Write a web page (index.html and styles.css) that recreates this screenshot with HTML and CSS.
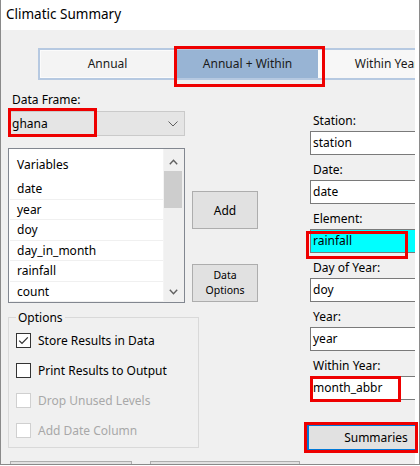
FILE: index.html
```html
<!DOCTYPE html>
<html>
<head>
<meta charset="utf-8">
<link rel="stylesheet" href="styles.css">
</head>
<body>
<div class="window">
  <div class="titlebar">Climatic Summary</div>
  <div class="client">
    <div class="tabs">
      <div class="tab">Annual</div>
      <div class="tab selected">Annual + Within</div>
      <div class="tab third">Within Year</div>
    </div>
    <div class="body">
      <div class="left">
        <div class="df-label">Data Frame:</div>
        <div class="combo">
          <span>ghana</span>
          <svg class="combo-arrow" width="10" height="6" viewBox="0 0 10 6"><path d="M0.5 0.5 L5 5 L9.5 0.5" fill="none" stroke="#5f5f5f" stroke-width="1"/></svg>
        </div>
        <div class="listbox">
          <div class="list-items">
            <div class="list-header">Variables</div>
            <div class="list-row">date</div>
            <div class="list-row">year</div>
            <div class="list-row">doy</div>
            <div class="list-row">day_in_month</div>
            <div class="list-row">rainfall</div>
            <div class="list-row">count</div>
          </div>
          <div class="scrollbar">
            <div class="sb-btn"><svg width="9" height="6" viewBox="0 0 9 6"><path d="M0.8 5.2 L4.5 1.2 L8.2 5.2" fill="none" stroke="#606060" stroke-width="1.4"/></svg></div>
            <div class="sb-thumb"></div>
            <div class="sb-track"></div>
            <div class="sb-btn"><svg width="9" height="6" viewBox="0 0 9 6"><path d="M0.8 0.8 L4.5 4.8 L8.2 0.8" fill="none" stroke="#606060" stroke-width="1.4"/></svg></div>
          </div>
        </div>
        <div class="group">
          <div class="legend">Options</div>
          <div class="check-row">
            <span class="checkbox"><svg width="13" height="13" viewBox="0 0 13 13"><path d="M2.2 6.6 L5 9.4 L10.8 3.4" fill="none" stroke="#333" stroke-width="1.3"/></svg></span>
            <span>Store Results in Data</span>
          </div>
          <div class="check-row">
            <span class="checkbox"></span>
            <span>Print Results to Output</span>
          </div>
          <div class="check-row disabled">
            <span class="checkbox"></span>
            <span>Drop Unused Levels</span>
          </div>
          <div class="check-row disabled">
            <span class="checkbox"></span>
            <span>Add Date Column</span>
          </div>
        </div>
        <div class="bottom-row">
          <div class="btn bottom-btn1"></div>
          <div class="btn bottom-btn2"></div>
        </div>
      </div>
      <div class="mid">
        <div class="btn add-btn">Add</div>
        <div class="btn data-btn">Data<br>Options</div>
      </div>
      <div class="right">
        <div class="field-label">Station:</div>
        <div class="input">station</div>
        <div class="field-label">Date:</div>
        <div class="input">date</div>
        <div class="field-label">Element:</div>
        <div class="input cyan">rainfall</div>
        <div class="field-label">Day of Year:</div>
        <div class="input">doy</div>
        <div class="field-label">Year:</div>
        <div class="input">year</div>
        <div class="field-label">Within Year:</div>
        <div class="input">month_abbr</div>
        <div class="btn summaries">Summaries</div>
      </div>
    </div>
  </div>
  <div class="mark mark-tab"></div>
  <div class="mark mark-df"></div>
  <div class="mark mark-element"></div>
  <div class="mark mark-within"></div>
  <div class="mark mark-summaries"></div>
</div>
</body>
</html>
```

FILE: styles.css
```css
* { box-sizing: border-box; }
html, body { margin: 0; padding: 0; background: #fff; }
body {
  font-family: "Noto Sans", "DejaVu Sans", sans-serif;
  font-size: 12px;
  color: #000;
}
.window {
  position: relative;
  width: 420px;
  height: 465px;
  border-left: 1px solid #8a8a8a;
  border-right: 1px solid #8a8a8a;
  border-bottom: 1px solid #8a8a8a;
  background: #fff;
  display: flex;
  flex-direction: column;
  overflow: hidden;
}
.titlebar {
  height: 30px;
  padding-left: 5px;
  font-size: 13.5px;
  line-height: 28px;
  color: #000;
}
.client {
  width: 414px;
  flex: 1;
  background: #f0f0f0;
  overflow: hidden;
}
.tabs {
  display: flex;
  margin: 18px 0 0 37px;
  height: 32px;
  border-top: 2px solid #b6c9e1;
  border-bottom: 2px solid #b6c9e1;
  width: 440px;
}
.tab {
  flex: none;
  width: 137px;
  border-left: 2px solid #b6c9e1;
  background: #f4f4f4;
  box-shadow: inset 0 0 0 1px #fbfbfb;
  text-align: center;
  line-height: 27px;
  color: #1a1a1a;
  white-space: nowrap;
}
.tab.selected {
  width: 143px;
  background: #98b4d4;
  border-left-color: #98b4d4;
  box-shadow: none;
}
.tab.third {
  width: 133px;
  border-left: 5px solid #fafafa;
  background: #f7f7f7;
  box-shadow: none;
}
.body {
  display: grid;
  grid-template-columns: 184px 118px 1fr;
  padding-left: 7px;
}
.left { display: flex; flex-direction: column; align-items: flex-start; }
.df-label {
  margin-top: 12px;
  line-height: 16px;
  padding-left: 4px;
}
.combo {
  margin-top: 3px;
  width: 177px;
  height: 25px;
  background: #e5e5e5;
  border: 1px solid #cacaca;
  display: flex;
  align-items: center;
  justify-content: space-between;
  padding: 0 6px 0 3px;
}
.combo-arrow { margin-top: 1px; }
.listbox {
  margin-top: 12px;
  width: 177px;
  height: 155px;
  border: 1px solid #828790;
  background: #fff;
  display: flex;
}
.list-items { flex: 1; }
.list-header {
  height: 30px;
  line-height: 31px;
  padding-left: 8px;
}
.list-row {
  height: 20.5px;
  line-height: 20px;
  padding-left: 7px;
  margin-left: 1px;
  border-bottom: 1px solid #f0f0f0;
}
.scrollbar {
  width: 21px;
  background: #f0f0f0;
  display: flex;
  flex-direction: column;
  border-left: 1px solid #f4f4f4;
}
.sb-btn {
  height: 21px;
  display: flex;
  align-items: center;
  justify-content: center;
  padding-right: 1px;
}
.sb-btn:first-child { height: 22px; padding-top: 3px; }
.sb-thumb {
  height: 37px;
  width: 18px;
  background: #cdcdcd;
}
.sb-track { flex: 1; }
.group {
  margin-top: 14px;
  width: 191px;
  height: 131px;
  border: 1px solid #d9d9d9;
  padding-left: 7px;
  display: flex;
  flex-direction: column;
  align-items: flex-start;
}
.legend {
  margin-top: -8px;
  line-height: 15px;
  padding: 0 2px;
  background: #f0f0f0;
}
.check-row {
  height: 30px;
  display: flex;
  align-items: center;
  gap: 7px;
}
.checkbox {
  width: 15px;
  height: 15px;
  border: 1px solid #333;
  background: #fff;
  display: flex;
  align-items: center;
  justify-content: center;
}
.check-row.disabled { color: #a8a8a8; }
.check-row.disabled .checkbox { border-color: #d0d0d0; }
.btn {
  background: #e1e1e1;
  border: 1px solid #adadad;
  display: flex;
  align-items: center;
  justify-content: center;
  text-align: center;
}
.bottom-row {
  display: flex;
  gap: 18px;
  margin-top: 13px;
  padding-left: 2px;
}
.bottom-btn1 { width: 122px; height: 25px; }
.bottom-btn2 { width: 150px; height: 25px; flex: none; }
.mid {
  display: flex;
  flex-direction: column;
  align-items: flex-start;
  padding-top: 111px;
}
.add-btn { width: 66px; height: 38px; }
.data-btn {
  margin-top: 35px;
  width: 66px;
  height: 38px;
  font-size: 10.5px;
  line-height: 15px;
}
.right {
  display: flex;
  flex-direction: column;
  align-items: flex-start;
  padding-top: 33px;
}
.field-label {
  line-height: 16px;
  padding-left: 3px;
  margin-bottom: 2px;
}
.input {
  width: 140px;
  height: 24px;
  border: 1px solid #7a7a7a;
  background: #fff;
  padding-left: 2px;
  line-height: 22px;
  margin-bottom: 7px;
}
.input.cyan { background: #00ffff; }
.summaries {
  margin-top: 17px;
  margin-left: -3px;
  width: 138px;
  height: 27px;
  border: 2px solid #0078d7;
}
.mark {
  position: absolute;
  border: 3px solid #ee0000;
}
.mark-tab { left: 173px; top: 46px; width: 151px; height: 41px; }
.mark-df { left: 7px; top: 108px; width: 89px; height: 29px; }
.mark-element { left: 305px; top: 231px; width: 102px; height: 28px; }
.mark-within { left: 309px; top: 376px; width: 91px; height: 26px; }
.mark-summaries { left: 303px; top: 422px; width: 114px; height: 31px; }
```
